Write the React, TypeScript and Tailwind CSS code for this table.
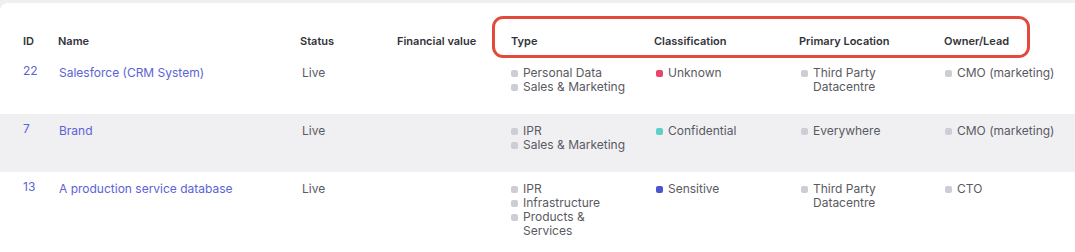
import React from 'react';

type Row = {
  id: string;
  name: string;
  status: string;
  types: string[];
  classification: { label: string; color: string };
  location: string[];
  owner: string;
  shaded?: boolean;
};

const rows: Row[] = [
  {
    id: '22',
    name: 'Salesforce (CRM System)',
    status: 'Live',
    types: ['Personal Data', 'Sales & Marketing'],
    classification: { label: 'Unknown', color: 'bg-[#e8456b]' },
    location: ['Third Party', 'Datacentre'],
    owner: 'CMO (marketing)',
  },
  {
    id: '7',
    name: 'Brand',
    status: 'Live',
    types: ['IPR', 'Sales & Marketing'],
    classification: { label: 'Confidential', color: 'bg-[#5fd0c8]' },
    location: ['Everywhere'],
    owner: 'CMO (marketing)',
    shaded: true,
  },
  {
    id: '13',
    name: 'A production service database',
    status: 'Live',
    types: ['IPR', 'Infrastructure', 'Products & Services'],
    classification: { label: 'Sensitive', color: 'bg-[#4b55cc]' },
    location: ['Third Party', 'Datacentre'],
    owner: 'CTO',
  },
];

const cols = 'grid grid-cols-[35px_242px_97px_113px_144px_145px_145px_1fr] pl-[23px]';

const Bullet = ({ color = 'bg-[#cdcdd6]' }: { color?: string }) => (
  <span className={`mt-[4px] mr-[5px] h-[7px] w-[7px] flex-shrink-0 rounded-[2px] ${color}`} />
);

const BulletItem = ({ text, color }: { text: string | string[]; color?: string }) => (
  <div className="flex items-start">
    <Bullet color={color} />
    <span className="whitespace-pre-line">{Array.isArray(text) ? text.join('\n') : text}</span>
  </div>
);

export default function App() {
  return (
    <div className="h-[252px] w-[1075px] overflow-hidden bg-[#efeff2] pt-[3px] font-['Inter',sans-serif]">
      <div className="relative h-full rounded-tl-[8px] bg-white">
        <div className="absolute left-[492px] top-[13px] h-[42px] w-[538px] rounded-[11px] border-[3px] border-[#e24a3b]" />

        <div className={`${cols} h-[53px] items-end pb-[7px] text-[11px] font-semibold text-[#33333a]`}>
          <div>ID</div>
          <div>Name</div>
          <div>Status</div>
          <div>Financial value</div>
          <div className="pl-[1px]">Type</div>
          <div>Classification</div>
          <div>Primary Location</div>
          <div>Owner/Lead</div>
        </div>

        {rows.map((r) => (
          <div
            key={r.id}
            className={`${cols} h-[58px] pt-[10px] text-[12px] leading-[14px] text-[#5a5a62] ${
              r.shaded ? 'bg-[#f0f0f3]' : ''
            }`}
          >
            <div className="-mt-[2px] text-[#5b63d6]">{r.id}</div>
            <div className="pl-[1px] text-[#5b63d6]">{r.name}</div>
            <div className="pl-[2px]">{r.status}</div>
            <div />
            <div className="pl-[1px]">
              {r.types.map((t) => (
                <div key={t} className="flex items-start">
                  <Bullet />
                  <span className="w-[104px]">{t}</span>
                </div>
              ))}
            </div>
            <div className="pl-[2px]">
              <BulletItem text={r.classification.label} color={r.classification.color} />
            </div>
            <div className="pl-[2px]">
              <BulletItem text={r.location} />
            </div>
            <div className="pl-[1px]">
              <BulletItem text={r.owner} />
            </div>
          </div>
        ))}
      </div>
    </div>
  );
}
